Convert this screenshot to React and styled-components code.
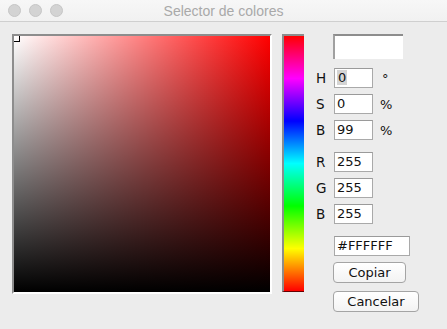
import React from "react";
import styled, { createGlobalStyle } from "styled-components";

const Global = createGlobalStyle`
  html, body { margin: 0; padding: 0; background: #ececec; }
  body { font-family: "DejaVu Sans", "Liberation Sans", sans-serif; }
`;

const Window = styled.div`
  width: 447px;
  height: 329px;
  background: #ececec;
  display: flex;
  flex-direction: column;
  overflow: hidden;
`;

const TitleBar = styled.div`
  height: 21px;
  border-bottom: 1px solid #cfcfcf;
  background: linear-gradient(#f7f7f7, #f1f1f1);
  display: flex;
  align-items: center;
  position: relative;
  flex-shrink: 0;
`;

const Lights = styled.div`
  display: flex;
  gap: 8px;
  padding-left: 8px;
`;

const Light = styled.span`
  width: 11px;
  height: 11px;
  border-radius: 50%;
  background: #d3d3d3;
  border: 0.5px solid #c6c6c6;
`;

const Title = styled.div`
  position: absolute;
  left: 0;
  right: 0;
  text-align: center;
  font-family: "Liberation Sans", Arial, sans-serif;
  font-size: 14px;
  color: #a9a9a9;
  pointer-events: none;
`;

const Body = styled.div`
  display: flex;
  padding: 12px 0 0 12px;
`;

const Field = styled.div`
  position: relative;
  width: 256px;
  height: 256px;
  border-top: 2px solid #8d8d8d;
  border-left: 2px solid #8d8d8d;
  border-right: 2px solid #fff;
  border-bottom: 2px solid #fff;
  background:
    linear-gradient(to bottom, rgba(0,0,0,0), #000),
    linear-gradient(to right, #fff, #f00);
  overflow: hidden;
  flex-shrink: 0;
`;

const Marker = styled.div`
  position: absolute;
  left: -2px;
  top: -2px;
  width: 8px;
  height: 8px;
  box-sizing: border-box;
  border: 1px solid #000;
`;

const HueStrip = styled.div`
  margin-left: 10px;
  width: 20px;
  height: 255px;
  border-top: 2px solid #8d8d8d;
  border-left: 2px solid #8d8d8d;
  border-bottom: 1px solid #600;
  background: linear-gradient(
    to bottom,
    #f00 0%,
    #f0f 16.67%,
    #00f 33.33%,
    #0ff 50%,
    #0f0 66.67%,
    #ff0 83.33%,
    #f00 100%
  );
  flex-shrink: 0;
`;

const Side = styled.div`
  margin-left: 12px;
  display: flex;
  flex-direction: column;
  font-size: 13px;
  color: #111;
`;

const Preview = styled.div`
  margin-left: 17px;
  width: 68px;
  height: 23px;
  background: #fff;
  border-top: 2px solid #8d8d8d;
  border-left: 2px solid #a0a0a0;
  border-right: 0;
  border-bottom: 0;
`;

const Row = styled.div`
  display: flex;
  align-items: center;
  height: 20px;
  margin-top: ${(p) => p.$gap}px;
`;

const Label = styled.span`
  width: 18px;
  font-size: 13.5px;
`;

const Input = styled.div`
  width: ${(p) => p.$w}px;
  height: 20px;
  box-sizing: border-box;
  border: 1px solid #a9a9a9;
  border-top-color: #9a9a9a;
  background: #fff;
  font-size: 13px;
  line-height: 18px;
  padding-left: 2px;
  margin-left: ${(p) => p.$ml || 0}px;
`;

const Selected = styled.span`
  background: #d4d4d4;
  padding: 0 1px;
`;

const Unit = styled.span`
  margin-left: ${(p) => p.$ml}px;
  font-size: 13px;
`;

const Button = styled.div`
  margin-top: ${(p) => p.$gap}px;
  margin-left: 17px;
  width: ${(p) => p.$w}px;
  height: 21px;
  box-sizing: border-box;
  border: 1px solid #a4a4a4;
  border-radius: 4px;
  background: linear-gradient(#ffffff, #f3f3f3);
  display: flex;
  align-items: center;
  justify-content: center;
  font-size: 13px;
  color: #111;
`;

export default function App() {
  return (
    <Window>
      <Global />
      <TitleBar>
        <Lights>
          <Light />
          <Light />
          <Light />
        </Lights>
        <Title>Selector de colores</Title>
      </TitleBar>
      <Body>
        <Field>
          <Marker />
        </Field>
        <HueStrip />
        <Side>
          <Preview />
          <Row $gap={9}>
            <Label>H</Label>
            <Input $w={39}><Selected>0</Selected></Input>
            <Unit $ml={9}>°</Unit>
          </Row>
          <Row $gap={6}>
            <Label>S</Label>
            <Input $w={39}>0</Input>
            <Unit $ml={7}>%</Unit>
          </Row>
          <Row $gap={6}>
            <Label>B</Label>
            <Input $w={39}>99</Input>
            <Unit $ml={7}>%</Unit>
          </Row>
          <Row $gap={12}>
            <Label>R</Label>
            <Input $w={39}>255</Input>
          </Row>
          <Row $gap={6}>
            <Label>G</Label>
            <Input $w={39}>255</Input>
          </Row>
          <Row $gap={6}>
            <Label>B</Label>
            <Input $w={39}>255</Input>
          </Row>
          <Row $gap={12}>
            <Input $w={76} $ml={18}>#FFFFFF</Input>
          </Row>
          <Button $gap={6} $w={73}>Copiar</Button>
          <Button $gap={8} $w={86}>Cancelar</Button>
        </Side>
      </Body>
    </Window>
  );
}
